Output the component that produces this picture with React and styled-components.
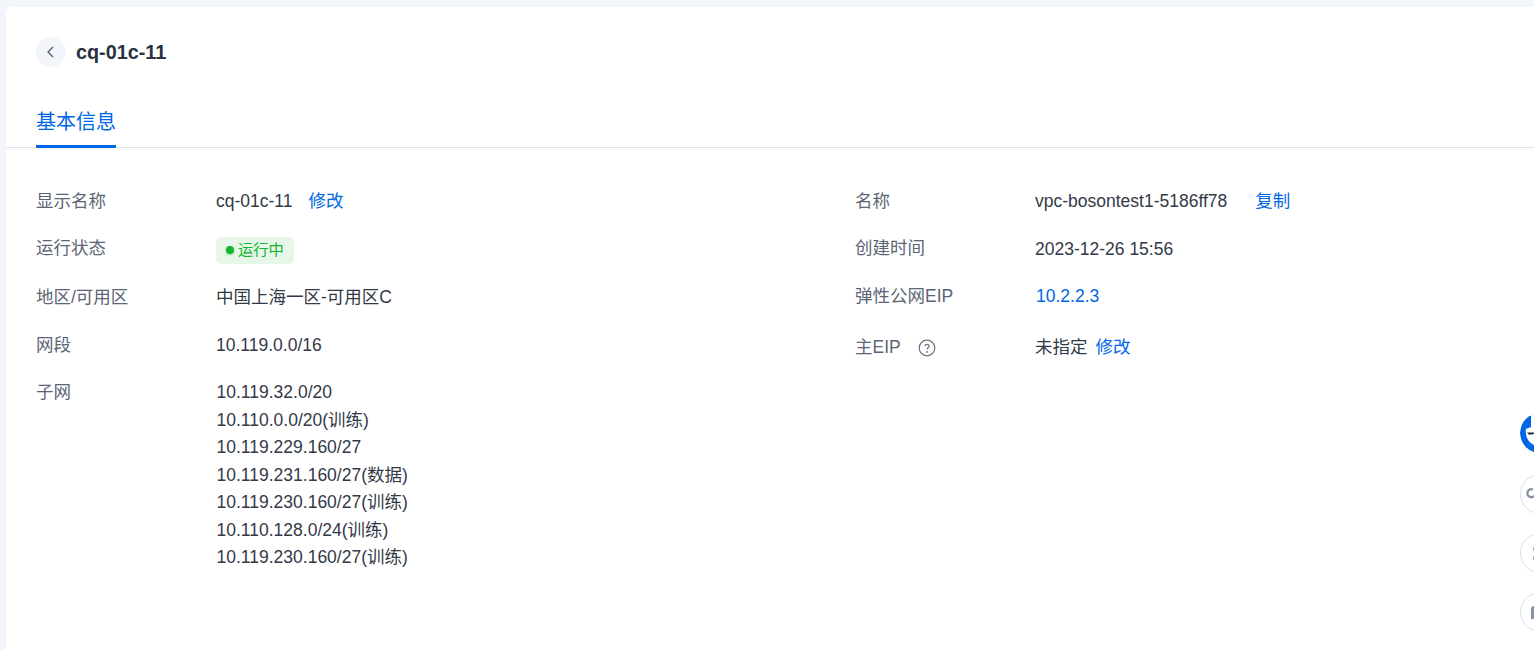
import React from 'react';
import styled, { createGlobalStyle } from 'styled-components';

const GlobalStyle = createGlobalStyle`
  html, body {
    margin: 0;
    padding: 0;
    height: 650px;
    overflow: hidden;
    background: #f2f5f9;
    font-family: "Liberation Sans", "Noto Sans CJK SC", sans-serif;
  }
`;

const subnets = [
  '10.119.32.0/20',
  '10.110.0.0/20(训练)',
  '10.119.229.160/27',
  '10.119.231.160/27(数据)',
  '10.119.230.160/27(训练)',
  '10.110.128.0/24(训练)',
  '10.119.230.160/27(训练)',
];

const App = () => {
  return (
    <Page>
      <GlobalStyle />
      <Card>
        <Header>
          <BackButton>
            <svg width="12" height="12" viewBox="0 0 12 12" fill="none">
              <path d="M8 1 L3 6 L8 11" stroke="#4b5563" strokeWidth="1.2" />
            </svg>
          </BackButton>
          <Title>cq-01c-11</Title>
        </Header>
        <Tabs>
          <Tab>基本信息</Tab>
        </Tabs>
        <Details>
          <Column>
            <Row>
              <Label>显示名称</Label>
              <Value>cq-01c-11<Link $gap={16}>修改</Link></Value>
            </Row>
            <Row>
              <Label $lift>运行状态</Label>
              <Value>
                <Status><StatusDot />运行中</Status>
              </Value>
            </Row>
            <Row>
              <Label>地区/可用区</Label>
              <Value>中国上海一区-可用区C</Value>
            </Row>
            <Row>
              <Label>网段</Label>
              <Value>10.119.0.0/16</Value>
            </Row>
            <Row>
              <Label $lift>子网</Label>
              <SubnetList>
                {subnets.map((s, i) => <div key={i}>{s}</div>)}
              </SubnetList>
            </Row>
          </Column>
          <Column>
            <Row>
              <Label>名称</Label>
              <Value>vpc-bosontest1-5186ff78<Link $gap={28}>复制</Link></Value>
            </Row>
            <Row>
              <Label $lift>创建时间</Label>
              <Value>2023-12-26 15:56</Value>
            </Row>
            <Row $top={-1}>
              <Label>弹性公网EIP</Label>
              <Value><Link $gap={1}>10.2.2.3</Link></Value>
            </Row>
            <Row $top={3}>
              <Label>
                主EIP
                <HelpIcon width="18" height="18" viewBox="0 0 18 18" fill="none">
                  <circle cx="9" cy="9" r="7.8" stroke="#6b7280" strokeWidth="1.2" />
                  <path d="M6.9 7.2 C6.9 4.6 11.1 4.7 11.1 7.2 C11.1 8.8 9 8.8 9 10.6" stroke="#6b7280" strokeWidth="1.2" />
                  <circle cx="9" cy="12.9" r="0.9" fill="#6b7280" />
                </HelpIcon>
              </Label>
              <Value>未指定<Link $gap={8}>修改</Link></Value>
            </Row>
          </Column>
        </Details>
      </Card>
      <FloatDock>
        <BlueFloat>
          <svg width="40" height="40" viewBox="0 0 40 40">
            <circle cx="20" cy="20" r="20" fill="#0066e6" />
            <path d="M11 0 L15 0 L15 33 L11 30 C8 28 5.7 24 5.7 16 L11 14 Z" fill="#fff" />
            <path d="M7 19.6 L14 19.4 L14 21 L9 21.8 Z" fill="#1f2937" />
          </svg>
        </BlueFloat>
        <FloatButton>
          <svg width="38" height="38" viewBox="0 0 38 38" fill="none">
            <path d="M12 14.5 A4 4 0 1 0 14 20" stroke="#8a93a6" strokeWidth="2.4" />
          </svg>
        </FloatButton>
        <FloatButton>
          <svg width="38" height="38" viewBox="0 0 38 38" fill="none">
            <path d="M13 13 L13 17 M13 22 L13 26" stroke="#8a93a6" strokeWidth="1.4" />
          </svg>
        </FloatButton>
        <FloatButton>
          <svg width="38" height="38" viewBox="0 0 38 38" fill="none">
            <path d="M13 13 C11 13 10 14 10 16 L10 26 L14 26 L14 13 Z" fill="#8a93a6" />
          </svg>
        </FloatButton>
      </FloatDock>
    </Page>
  );
};

export default App;

// Styled Components
const Page = styled.div`
  padding: 7px 0 0 6px;
  height: 643px;
`;

const Card = styled.div`
  height: 100%;
  background: #fff;
  border-radius: 6px 0 0 0;
  padding-top: 30px;
  box-sizing: border-box;
`;

const Header = styled.div`
  display: flex;
  align-items: center;
  gap: 10px;
  padding-left: 30px;
`;

const BackButton = styled.div`
  width: 30px;
  height: 30px;
  border-radius: 50%;
  background: #f2f5f9;
  display: flex;
  align-items: center;
  justify-content: center;
`;

const Title = styled.div`
  font-size: 19.8px;
  line-height: 30px;
  font-weight: 700;
  color: #2b3240;
`;

const Tabs = styled.div`
  margin-top: 30px;
  padding-left: 30px;
  height: 51px;
  box-sizing: border-box;
  border-bottom: 1px solid #dde3ee;
  display: flex;
`;

const Tab = styled.div`
  height: 51px;
  box-sizing: border-box;
  font-size: 20px;
  line-height: 50px;
  color: #0066e6;
  border-bottom: 3px solid #0066e6;
  border-radius: 0 0 1px 1px;
`;

const Details = styled.div`
  display: grid;
  grid-template-columns: 819px 1fr;
  padding: 39px 0 0 30px;
`;

const Column = styled.div`
  display: flex;
  flex-direction: column;
  gap: 20px;
`;

const Row = styled.div`
  display: grid;
  grid-template-columns: 180px 1fr;
  font-size: 17.5px;
  line-height: 28px;
  margin-top: ${(p) => p.$top || 0}px;
`;

const Label = styled.div`
  color: #5c6575;
  display: flex;
  align-items: center;
  height: 28px;
  padding-bottom: ${(p) => (p.$lift ? 2 : 0)}px;
  box-sizing: border-box;
`;

const Value = styled.div`
  color: #333a47;
  display: flex;
  align-items: center;
  height: 28px;
`;

const Link = styled.span`
  color: #0066e6;
  margin-left: ${(p) => p.$gap}px;
`;

const Status = styled.span`
  display: inline-flex;
  align-items: center;
  gap: 4px;
  height: 27px;
  width: 78px;
  margin-top: 2px;
  box-sizing: border-box;
  padding-left: 10px;
  background: #e6f7ea;
  border-radius: 5px;
  color: #12b52e;
  font-size: 15.3px;
`;

const StatusDot = styled.i`
  width: 8px;
  height: 8px;
  border-radius: 50%;
  background: #12b52e;
  box-shadow: 0 1px 3px rgba(18, 181, 46, 0.4);
`;

const SubnetList = styled.div`
  color: #333a47;
  line-height: 27.5px;
  padding-left: 0.5px;
`;

const HelpIcon = styled.svg`
  margin: 2px 0 0 17px;
`;

const FloatDock = styled.div`
  position: fixed;
  left: 1520px;
  top: 413px;
  display: flex;
  flex-direction: column;
  gap: 19px;
`;

const BlueFloat = styled.div`
  width: 40px;
  height: 40px;
  border-radius: 50%;
  margin-bottom: 2px;
  overflow: hidden;
`;

const FloatButton = styled.div`
  width: 40px;
  height: 40px;
  box-sizing: border-box;
  border-radius: 50%;
  border: 1px solid #d8deec;
  background: #fff;
  overflow: hidden;
`;
